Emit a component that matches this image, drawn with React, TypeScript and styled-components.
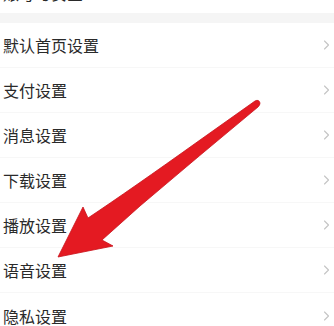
import React from "react";
import styled, { createGlobalStyle } from "styled-components";

const GlobalStyle = createGlobalStyle`
  html, body {
    margin: 0;
    padding: 0;
    background: #ffffff;
  }
  body {
    font-family: "Noto Sans CJK SC", "Noto Sans", sans-serif;
  }
`;

const Page = styled.div`
  position: relative;
  width: 334px;
  height: 326px;
  overflow: hidden;
  background: #ffffff;
`;

const List = styled.div`
  display: flex;
  flex-direction: column;
  margin-top: -27px;
`;

const Row = styled.div<{ $h?: number; $line?: boolean }>`
  height: ${(p) => p.$h ?? 45}px;
  flex: 0 0 auto;
  display: flex;
  align-items: center;
  justify-content: space-between;
  padding: 0 4px 0 3px;
  box-sizing: border-box;
  border-bottom: ${(p) => (p.$line ? "1px solid #f7f7f7" : "none")};
`;

const Label = styled.span`
  font-size: 16px;
  line-height: 16px;
  color: #2a2a2a;
`;

const Band = styled.div`
  height: 10px;
  flex: 0 0 auto;
  background: #f5f5f5;
`;

const ChevronSvg = styled.svg`
  width: 7px;
  height: 10px;
  flex: 0 0 auto;
`;

const ArrowOverlay = styled.svg`
  position: absolute;
  left: 0;
  top: 0;
  width: 334px;
  height: 326px;
  pointer-events: none;
`;

const Chevron = () => (
  <ChevronSvg viewBox="0 0 7 10">
    <polyline
      points="1.5,1 5.5,5 1.5,9"
      fill="none"
      stroke="#c4c4c4"
      strokeWidth="1.1"
      strokeLinecap="round"
      strokeLinejoin="round"
    />
  </ChevronSvg>
);

const items = [
  "默认首页设置",
  "支付设置",
  "消息设置",
  "下载设置",
  "播放设置",
  "语音设置",
  "隐私设置",
];

export default function App() {
  return (
    <>
      <GlobalStyle />
      <Page>
        <List>
          <Row $h={40}>
            <Label>账号与安全</Label>
            <Chevron />
          </Row>
          <Band />
          {items.map((t, i) => (
            <Row key={t} $line={i < items.length - 1}>
              <Label>{t}</Label>
              <Chevron />
            </Row>
          ))}
        </List>
        <ArrowOverlay viewBox="0 0 334 326">
          <path
            d="M58 257 L83 207 L88 218 Q130 190 200 140 L255 101 Q259 99 260 103 Q260 105 258 107 Q200 155 140 206 L102 240 L113 246 Z"
            fill="#e41a22"
            stroke="#c9121a"
            strokeWidth="0.8"
            strokeLinejoin="round"
          />
        </ArrowOverlay>
      </Page>
    </>
  );
}
